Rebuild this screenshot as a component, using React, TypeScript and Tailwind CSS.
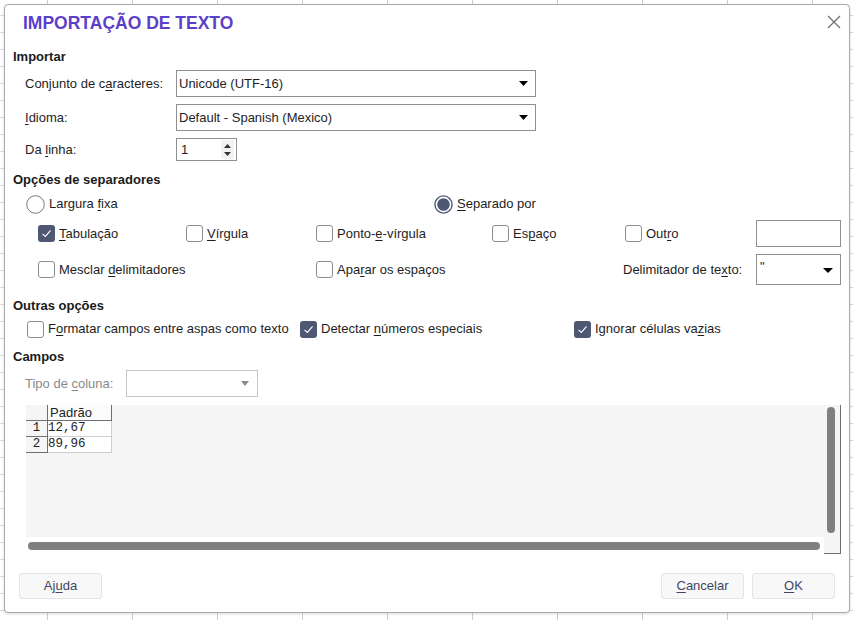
import React from "react";

// Mnemonic underline
const U: React.FC<{ children: React.ReactNode }> = ({ children }) => (
  <span className="underline decoration-1 underline-offset-[2px]">{children}</span>
);

const Check: React.FC<{ checked?: boolean }> = ({ checked }) =>
  checked ? (
    <span className="flex h-[17px] w-[17px] shrink-0 items-center justify-center rounded-[3px] bg-[#4e5872]">
      <svg width="11" height="9" viewBox="0 0 11 9">
        <path d="M1.5 4.8 L4.3 7.4 L9.6 1.4" stroke="#ffffff" strokeWidth="1.1" fill="none" />
      </svg>
    </span>
  ) : (
    <span className="h-[17px] w-[17px] shrink-0 rounded-[3px] border border-[#8d8d8d] bg-white" />
  );

const Radio: React.FC<{ checked?: boolean }> = ({ checked }) => (
  <svg width="19" height="19" viewBox="0 0 19 19" className="shrink-0">
    {checked ? (
      <>
        <circle cx="9.5" cy="9.5" r="8.6" fill="white" stroke="#4e5872" strokeWidth="1.4" />
        <circle cx="9.5" cy="9.5" r="6.3" fill="#4e5872" />
      </>
    ) : (
      <circle cx="9.5" cy="9.5" r="8.8" fill="white" stroke="#7a7a7a" strokeWidth="1" />
    )}
  </svg>
);

const Arrow: React.FC<{ color?: string; w?: number }> = ({ color = "#000000", w = 9 }) => (
  <svg width={w} height="5" viewBox={`0 0 ${w} 5`} className="shrink-0">
    <polygon points={`0,0 ${w},0 ${w / 2},5`} fill={color} />
  </svg>
);

const CheckItem: React.FC<{ checked?: boolean; className: string; children: React.ReactNode }> = ({
  checked,
  className,
  children,
}) => (
  <div className={`flex items-center gap-[4px] ${className}`}>
    <Check checked={checked} />
    <span>{children}</span>
  </div>
);

const SectionTitle: React.FC<{ className: string; children: React.ReactNode }> = ({ className, children }) => (
  <div className={`flex items-center pl-[8px] font-bold text-[#1a1a1a] ${className}`}>{children}</div>
);

export default function App() {
  return (
    <div className="h-[620px] w-[853px] overflow-hidden bg-white bg-[linear-gradient(to_right,#cfcfcf_1px,transparent_1px),linear-gradient(to_bottom,#d8d8d8_1px,transparent_1px)] bg-[size:85px_17px] bg-[position:47px_15px] pt-[4px] pl-[4px] font-['Liberation_Sans',Arial,sans-serif] text-[13px] text-[#1e1e1e]">
      <div className="flex h-[609px] w-[846px] flex-col rounded-[4px] border border-[#a9a9a9] bg-white shadow-[0_1px_3px_rgba(0,0,0,0.15)]">
        {/* Title */}
        <div className="flex h-[34px] items-center justify-between pl-[18px] pr-[8px] pt-[3px]">
          <span className="text-[17.5px] font-bold text-[#5b3fc8]">IMPORTAÇÃO DE TEXTO</span>
          <svg width="14" height="14" viewBox="0 0 14 14" className="-mt-[3px]">
            <path d="M1 1 L13 13 M13 1 L1 13" stroke="#6e6e6e" strokeWidth="1.2" />
          </svg>
        </div>

        <SectionTitle className="mt-[5px] h-[26px]">Importar</SectionTitle>

        <div className="flex h-[27px] items-center pl-[20px]">
          <span className="w-[151px]">
            Conjunto de c<U>a</U>racteres:
          </span>
          <div className="flex h-[27px] w-[360px] items-center justify-between border border-[#8f8f8f] pl-[2px] pr-[7px]">
            <span>Unicode (UTF-16)</span>
            <Arrow />
          </div>
        </div>

        <div className="mt-[7px] flex h-[27px] items-center pl-[20px]">
          <span className="w-[151px]">
            <U>I</U>dioma:
          </span>
          <div className="flex h-[27px] w-[360px] items-center justify-between border border-[#8f8f8f] pl-[2px] pr-[7px]">
            <span>Default - Spanish (Mexico)</span>
            <Arrow />
          </div>
        </div>

        <div className="mt-[7px] flex h-[23px] items-center pl-[20px]">
          <span className="w-[151px]">
            Da <U>l</U>inha:
          </span>
          <div className="flex h-[23px] w-[61px] items-center justify-between border border-[#8f8f8f] pl-[4px] pr-[2px]">
            <span>1</span>
            <div className="flex h-[19px] w-[13px] flex-col items-center justify-center gap-[4px] bg-[#f2f2f2]">
              <svg width="7" height="4" viewBox="0 0 7 4">
                <polygon points="0,4 7,4 3.5,0" fill="#333" />
              </svg>
              <svg width="7" height="4" viewBox="0 0 7 4">
                <polygon points="0,0 7,0 3.5,4" fill="#333" />
              </svg>
            </div>
          </div>
        </div>

        <SectionTitle className="mt-[9px] h-[20px]">Opções de separadores</SectionTitle>

        <div className="mt-[4px] flex h-[20px] items-center pl-[21px]">
          <div className="flex w-[408px] items-center gap-[4px]">
            <Radio />
            <span>
              Largura <U>f</U>ixa
            </span>
          </div>
          <div className="flex items-center gap-[4px]">
            <Radio checked />
            <span>
              <U>S</U>eparado por
            </span>
          </div>
        </div>

        <div className="mt-[6px] flex h-[27px] items-center pl-[33px]">
          <CheckItem checked className="w-[148px]">
            <U>T</U>abulação
          </CheckItem>
          <CheckItem className="w-[130px]">
            <U>V</U>írgula
          </CheckItem>
          <CheckItem className="w-[176px]">
            Ponto-<U>e</U>-vírgula
          </CheckItem>
          <CheckItem className="w-[133px]">
            Es<U>p</U>aço
          </CheckItem>
          <CheckItem className="w-[131px]">
            Out<U>r</U>o
          </CheckItem>
          <div className="h-[27px] w-[85px] border border-[#8f8f8f]" />
        </div>

        <div className="mt-[7px] flex h-[31px] items-center pl-[33px]">
          <CheckItem className="w-[278px]">
            Mesclar <U>d</U>elimitadores
          </CheckItem>
          <CheckItem className="w-[307px]">
            Apa<U>r</U>ar os espaços
          </CheckItem>
          <span className="w-[133px]">
            Delimitador de te<U>x</U>to:
          </span>
          <div className="flex h-[31px] w-[85px] items-start justify-between border border-[#8f8f8f] pl-[3px] pr-[7px] pt-[2px]">
            <span>"</span>
            <span className="mt-[11px]">
              <Arrow w={10} />
            </span>
          </div>
        </div>

        <SectionTitle className="mt-[11px] h-[20px]">Outras opções</SectionTitle>

        <div className="mt-[3px] flex h-[20px] items-center pl-[22px]">
          <CheckItem className="w-[273px]">
            F<U>o</U>rmatar campos entre aspas como texto
          </CheckItem>
          <CheckItem checked className="w-[274px]">
            Detectar <U>n</U>úmeros especiais
          </CheckItem>
          <CheckItem checked className="">
            Ignorar células va<U>z</U>ias
          </CheckItem>
        </div>

        <SectionTitle className="mt-[7px] h-[21px]">Campos</SectionTitle>

        <div className="mt-[3px] flex h-[27px] items-center pl-[20px] text-[#8a8a8a]">
          <span className="w-[101px]">
            Tipo de <U>c</U>oluna:
          </span>
          <div className="flex h-[27px] w-[132px] items-center justify-end border border-[#c6c6c6] pr-[8px]">
            <Arrow color="#8a8a8a" w={8} />
          </div>
        </div>

        {/* Preview */}
        <div className="ml-[21px] mt-[8px] flex h-[149px] w-[815px] flex-col">
          <div className="flex h-[132px]">
            <div className="flex-1 bg-[#f5f5f5] font-['Liberation_Mono',monospace] text-[12.5px] leading-[15px]">
              <div className="grid w-[86px] grid-cols-[22px_64px]">
                <div className="h-[16px] border-b border-r border-[#6f6f6f]" />
                <div className="h-[16px] border-b border-r border-[#6f6f6f] bg-[#fcfcfc] pl-[2px] font-['Liberation_Sans',Arial,sans-serif] text-[13px]">
                  Padrão
                </div>
                <div className="h-[16px] border-b border-r border-[#6f6f6f] text-center">1</div>
                <div className="h-[16px] border-b border-r border-[#cfcfcf] bg-white">12,67</div>
                <div className="h-[16px] border-b border-r border-[#6f6f6f] text-center">2</div>
                <div className="h-[16px] border-b border-r border-[#cfcfcf] bg-white">89,96</div>
              </div>
            </div>
            <div className="w-[17px] border-r border-[#6f6f6f] bg-[#f5f5f5] pl-[3px] pt-[2px]">
              <div className="h-[126px] w-[8px] rounded-full bg-[#7f7f7f]" />
            </div>
          </div>
          <div className="flex h-[17px]">
            <div className="flex flex-1 items-center bg-white pl-[2px] pr-[4px]">
              <div className="h-[8px] w-full rounded-full bg-[#7f7f7f]" />
            </div>
            <div className="w-[17px] border-b border-r border-[#6f6f6f] bg-[#f5f5f5]" />
          </div>
        </div>

        {/* Buttons */}
        <div className="mt-[19px] flex h-[26px] items-center pl-[14px] pr-[14px] text-[#3e4762]">
          <div className="flex h-[26px] w-[83px] items-center justify-center rounded-[3px] border border-[#e4e4e4] bg-[#f8f8f8]">
            Aj<U>u</U>da
          </div>
          <div className="ml-auto flex h-[26px] w-[83px] items-center justify-center rounded-[3px] border border-[#e4e4e4] bg-[#f8f8f8]">
            <U>C</U>ancelar
          </div>
          <div className="ml-[8px] flex h-[26px] w-[83px] items-center justify-center rounded-[3px] border border-[#e4e4e4] bg-[#f8f8f8]">
            <U>O</U>K
          </div>
        </div>
      </div>
    </div>
  );
}
